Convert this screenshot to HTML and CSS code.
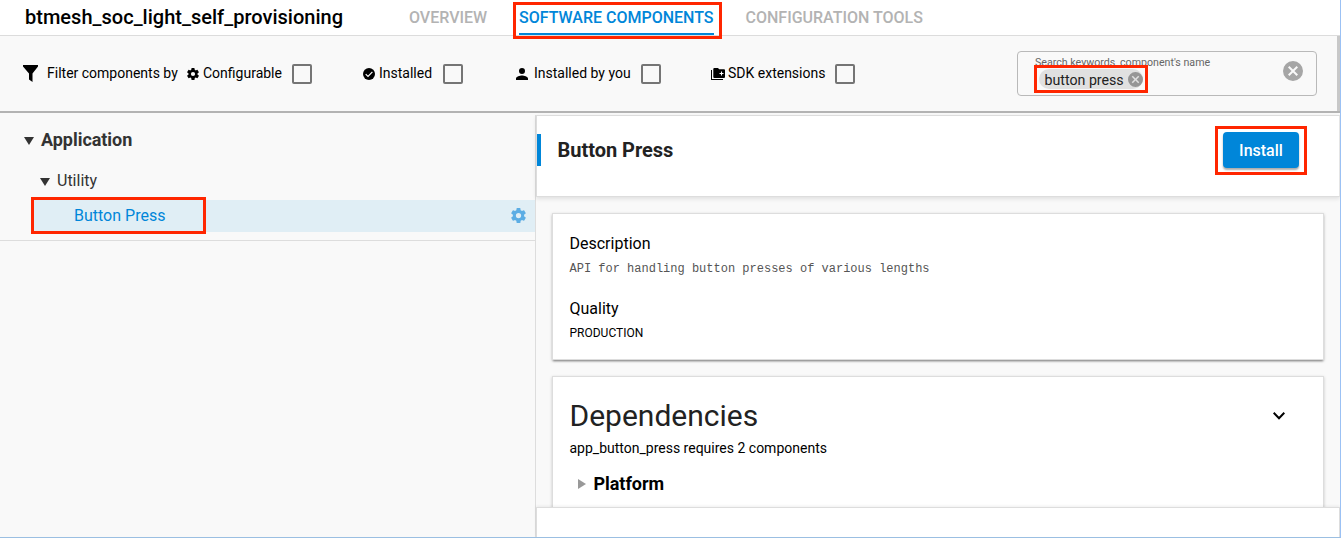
FILE: index.html
```html
<!DOCTYPE html>
<html lang="en">
<head>
<meta charset="utf-8">
<title>btmesh_soc_light_self_provisioning</title>
<link rel="stylesheet" href="styles.css">
</head>
<body>
<svg class="defs" width="0" height="0">
  <symbol id="gear" viewBox="2 2 20 20"><path d="M19.4 13a7.5 7.5 0 0 0 0-2l2.1-1.650a.5.5 0 0 0 .12-.64l-2-3.460a.5.5 0 0 0-.61-.22l-2.490 1a7.300 7.300 0 0 0-1.690-.98l-.38-2.650A.49.49 0 0 0 14 2h-4a.49.49 0 0 0-.49.42l-.38 2.650c-.61.25-1.170.59-1.690.98l-2.490-1a.5.5 0 0 0-.61.22l-2 3.460a.5.5 0 0 0 .12.64L4.570 11a8 8 0 0 0 0 2l-2.110 1.650a.5.5 0 0 0-.12.64l2 3.460c.12.22.39.3.61.22l2.490-1c.52.4 1.080.73 1.690.98l.38 2.650c.03.24.24.42.49.42h4c.25 0 .46-.18.49-.42l.38-2.650c.61-.25 1.170-.59 1.690-.98l2.490 1c.23.09.49 0 .61-.22l2-3.460a.5.5 0 0 0-.12-.64zM12 15.500a3.500 3.500 0 1 1 0-7 3.500 3.500 0 0 1 0 7z"/></symbol>
  <symbol id="clear" viewBox="2 2 20 20"><path d="M12 2a10 10 0 1 0 0 20 10 10 0 0 0 0-20zm5 13.590L15.590 17 12 13.410 8.410 17 7 15.590 10.590 12 7 8.410 8.410 7 12 10.590 15.590 7 17 8.410 13.410 12z"/></symbol>
</svg>
<div class="window">
  <header class="topbar">
    <h1 class="project">btmesh_soc_light_self_provisioning</h1>
    <nav class="tabs">
      <a class="tab tab-overview">OVERVIEW</a>
      <a class="tab tab-software active marked"><span>SOFTWARE COMPONENTS</span></a>
      <a class="tab tab-tools">CONFIGURATION TOOLS</a>
    </nav>
  </header>

  <section class="filters">
    <svg class="funnel" width="15" height="17" viewBox="0 0 15 17"><path d="M0 0h15v1.500L9.500 8.500V17L6 14.500v-6L0 1.500z"/></svg>
    <span class="filter-title">Filter components by</span>
    <div class="filter configurable"><svg width="12" height="12"><use href="#gear"/></svg><span>Configurable</span><i class="checkbox"></i></div>
    <div class="filter installed"><svg width="12" height="12" viewBox="0 0 12 12"><circle cx="6" cy="6" r="6"/><path d="M2.700 6.200 5 8.500l4.400-4.600" fill="none" stroke="#fff" stroke-width="1.200"/></svg><span>Installed</span><i class="checkbox"></i></div>
    <div class="filter by-you"><svg width="12" height="12" viewBox="4 4 16 16"><path d="M12 12a4 4 0 1 0 0-8 4 4 0 0 0 0 8zm0 2c-2.670 0-8 1.340-8 4v2h16v-2c0-2.660-5.330-4-8-4z"/></svg><span>Installed by you</span><i class="checkbox"></i></div>
    <div class="filter extensions"><svg width="14" height="12" viewBox="0 0 14 12"><path d="M0 2h1v9h11v1H0zM3.300 0H7l1.200 1.200H13q1 0 1 1V9q0 1-1 1H3.300q-1 0-1-1V1q0-1 1-1z"/><path d="M10.500 3.500v4M8.500 5.500h4" stroke="#fff" stroke-width="1.100"/></svg><span>SDK extensions</span><i class="checkbox"></i></div>
    <div class="search">
      <div class="search-main">
        <label>Search keywords, component's name</label>
        <div class="chip-frame marked"><span class="chip"><span>button press</span><svg width="15" height="15"><use href="#clear"/></svg></span></div>
      </div>
      <svg class="search-clear" width="20" height="20"><use href="#clear"/></svg>
    </div>
    <div class="scroll-thumb"></div>
  </section>

  <main class="content">
    <aside class="tree">
      <div class="tree-row category"><i class="caret"></i><span>Application</span></div>
      <div class="tree-row group"><i class="caret"></i><span>Utility</span></div>
      <div class="tree-row leaf"><span class="leaf-name marked"><span>Button Press</span></span><svg width="15" height="15"><use href="#gear"/></svg></div>
    </aside>
    <section class="detail">
      <header class="detail-head">
        <i class="accent"></i>
        <h2>Button Press</h2>
        <div class="install-frame marked"><button class="install">Install</button></div>
      </header>
      <div class="cards">
        <article class="card summary">
          <h3>Description</h3>
          <p class="description">API for handling button presses of various lengths</p>
          <h3>Quality</h3>
          <p class="quality">PRODUCTION</p>
        </article>
        <article class="card dependencies">
          <div class="dep-head"><h2>Dependencies</h2><svg width="12" height="8" viewBox="0 0 12 8"><path d="m.7.8 5.300 5.400L11.300.8" fill="none" stroke="#000" stroke-width="2"/></svg></div>
          <p class="requires">app_button_press requires 2 components</p>
          <div class="platform"><i class="caret-right"></i><span>Platform</span></div>
        </article>
      </div>
      <footer class="detail-foot"></footer>
    </section>
  </main>
</div>
</body>
</html>
```
FILE: styles.css
```css
* { box-sizing: border-box; }
body { margin: 0; background: #fff; color: #000; font-family: Roboto, "Liberation Sans", sans-serif; }
h1, h2, h3, p { margin: 0; }
svg { display: block; flex: none; }
.defs { position: absolute; }
.window { display: flex; flex-direction: column; width: 1341px; height: 538px; overflow: hidden; border-right: 1px solid #9bc1f4; border-bottom: 1px solid #9bbfe2; white-space: nowrap; }

/* Red callout frame drawn around an element */
.marked { position: relative; }
.marked::after { content: ""; position: absolute; inset: 0; border: 3px solid #ff2600; pointer-events: none; z-index: 2; }

.topbar { display: flex; flex: none; height: 36px; border-bottom: 1px solid #dcdcdc; }
.project { width: 384px; padding-left: 25px; font-size: 20px; font-weight: 500; line-height: 34px; letter-spacing: .015px; }
.tabs { display: flex; }
.tab { height: 35px; font-size: 16px; font-weight: 500; line-height: 35px; color: #b3b3b3; }
.tab-overview { width: 129px; padding-left: 25px; }
.tab-software { width: 209px; height: 37px; margin-top: 2px; padding: 0 6px; line-height: 31px; color: #0086d9; }
.tab-software span { display: block; width: 195px; height: 33px; border-bottom: 2px solid #0086d9; }
.tab-tools { margin-left: 23.5px; }

.filters { display: flex; align-items: center; flex: none; height: 77px; padding-left: 23px; background: #f9f9f9; border-bottom: 2px solid #b3b3b3; font-size: 14px; }
.filter-title { width: 140px; margin-left: 9px; padding-bottom: 2px; }
.filter { display: flex; align-items: center; }
.filter span { flex: 1; margin-left: 4px; padding-bottom: 2px; }
.checkbox { flex: none; width: 20px; height: 20px; border: 2px solid #757575; border-radius: 2px; }
.configurable { width: 125px; }
.installed { width: 100px; margin-left: 51px; }
.by-you { width: 145px; margin-left: 53px; }
.by-you span { margin-left: 6px; }
.extensions { width: 144px; margin-left: 50px; }
.extensions span { margin-left: 3px; }
.search { display: flex; width: 300px; height: 45px; margin-left: 162px; border: 1px solid #b9b9b9; border-radius: 4px; }
.search-main { padding: 4px 0 0 16px; width: 265px; }
.search label { display: block; height: 9px; margin-left: 1px; font-size: 10.65px; line-height: 13px; color: #666; }
.chip-frame { width: 114px; height: 28px; padding: 4px 5px; }
.chip { display: flex; align-items: center; justify-content: space-between; height: 20px; padding: 0 .5px 0 5.5px; border-radius: 10px; background: #e0e0e0; color: #222; font-size: 14.2px; }
.chip span { padding-top: 2px; }
.chip svg { fill: #969696; }
.search-clear { margin-top: 9px; fill: #a6a6a6; }
.scroll-thumb { width: 3px; height: 75px; margin-left: 20px; background: #c8c8c8; }

.content { display: flex; flex: 1; min-height: 0; background: #f9f9f9; }
.tree { width: 535px; height: 128px; border-bottom: 1px solid #ddd; color: #333; }
.tree-row { display: flex; align-items: center; }
.caret { margin-top: 1px; border: 5px solid transparent; border-top: 8px solid #333; border-bottom: 0; }
.category { height: 54px; padding-left: 24px; font-size: 18px; font-weight: 700; letter-spacing: -.04px; }
.category span { margin-left: 7px; padding-bottom: 2px; }
.group { height: 28px; padding-left: 40px; font-size: 16px; }
.group .caret { margin-top: 2px; }
.group span { margin-left: 7px; padding-bottom: 1px; }
.leaf { height: 32px; margin: 5px 0 0 31px; background: #e0eef5; justify-content: space-between; padding-right: 9px; }
.leaf-name { width: 175px; height: 37px; margin-bottom: 1px; padding-left: 43px; font-size: 16px; line-height: 37px; color: #0086d9; }
.leaf svg { margin-bottom: 1px; fill: #5cade4; }

.detail { display: flex; flex-direction: column; flex: 1; margin-top: 2px; border-left: 1px solid #ddd; min-width: 0; }
.detail-head { display: flex; flex: none; height: 82px; border: 1px solid #ddd; border-right-color: #e5e5e5; background: #fff; box-shadow: 0 2px 4px #0000001a; }
.accent { width: 4px; height: 32px; margin-top: 18px; background: #0086d9; }
.detail-head h2 { margin-left: 16.5px; font-size: 20px; font-weight: 700; line-height: 69px; letter-spacing: -.02px; color: #222; }
.install-frame { width: 92px; height: 49px; margin: 10px 32px 0 auto; padding: 6px 8px; }
.install { width: 76px; height: 36px; padding: 0; border: 0; border-radius: 4px; background: #0086d9; color: #fff; font: 500 16px Roboto, sans-serif; box-shadow: 0 2px 2px #0005; }
.cards { flex: 1; min-height: 0; padding: 16px 16px 0; overflow: hidden; }
.card { border: 1px solid #ddd; background: #fff; box-shadow: 0 1px 3px #0003; }
.summary { height: 147px; padding: 20px 16.5px 0; box-shadow: 0 2px 2px -1px #0006, 0 1px 3px #0003; }
.card h3 { font-size: 16px; font-weight: 400; line-height: 20px; }
.description { height: 45px; padding-top: 7px; font: 12px/16px "Courier New", "Liberation Mono", monospace; color: #555; }
.quality { padding-top: 6px; font-size: 12px; line-height: 16px; }
.dependencies { height: 240px; margin-top: 16px; padding: 20px 16.5px; }
.dep-head { display: flex; align-items: center; justify-content: space-between; height: 38px; padding-right: 21.5px; }
.dep-head h2 { padding-bottom: 2px; font-size: 30px; font-weight: 400; color: #222; }
.requires { margin-top: 4px; font-size: 14px; line-height: 18px; }
.platform { display: flex; align-items: center; margin-top: 16px; padding-left: 8px; font-size: 18px; font-weight: 700; line-height: 22px; letter-spacing: -.05px; }
.platform span { margin-left: 8px; }
.caret-right { border: 5px solid transparent; border-left: 8px solid #999; border-right: 0; }
.detail-foot { flex: none; height: 30px; border: 1px solid #ddd; border-bottom: 0; background: #fff; box-shadow: 0 -1px 3px #0001; }
```
